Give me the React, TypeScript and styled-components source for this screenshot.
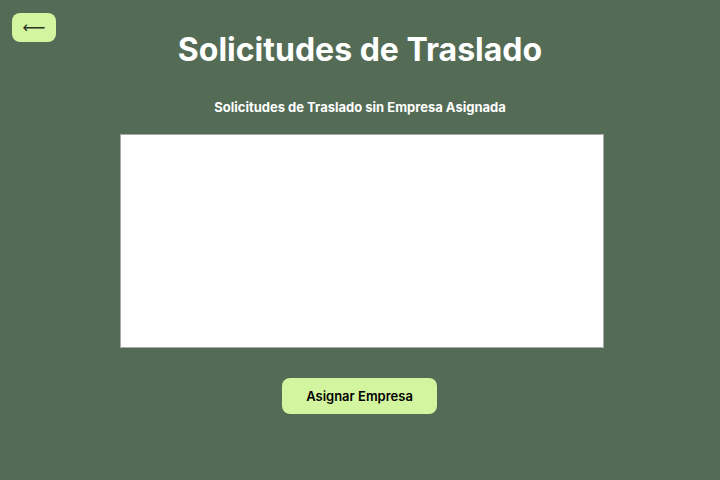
import React from "react";
import styled, { createGlobalStyle } from "styled-components";

const Global = createGlobalStyle`
  html, body { margin: 0; padding: 0; background: #546c56; }
  body { font-family: Inter, "Noto Sans", sans-serif; }
  #root { min-height: 480px; }
`;

const Page = styled.div`
  min-height: 480px;
  box-sizing: border-box;
  padding: 13px 12px 0;
  display: flex;
  flex-direction: column;
  align-items: center;
`;

const Header = styled.header`
  width: 100%;
  display: grid;
  grid-template-columns: 1fr auto 1fr;
  align-items: start;
`;

const BackButton = styled.button`
  justify-self: start;
  width: 44px;
  height: 29px;
  border: none;
  border-radius: 8px;
  background: #d3f59f;
  color: #2a3526;
  font-size: 16px;
  line-height: 1;
  padding: 1px 0 0;
  display: flex;
  align-items: center;
  justify-content: center;
  cursor: pointer;
  font-family: "DejaVu Sans", sans-serif;
`;

const Title = styled.h1`
  margin: 18px 0 0;
  color: #ffffff;
  font-size: 32px;
  font-weight: 700;
  line-height: 38px;
  text-align: center;
`;

const Subtitle = styled.h2`
  margin: 30px 0 0;
  color: #ffffff;
  font-size: 13px;
  font-weight: 700;
  text-align: center;
`;

const ListBox = styled.div`
  margin: 19px 0 0 4px;
  width: 484px;
  height: 214px;
  box-sizing: border-box;
  background: #ffffff;
  border: 1px solid #a9a9a9;
`;

const ActionButton = styled.button`
  margin: 30px 0 0 -1px;
  width: 155px;
  height: 36px;
  border: none;
  border-radius: 8px;
  background: #d3f59f;
  color: #000000;
  font-family: Inter, sans-serif;
  font-size: 13px;
  font-weight: 600;
  cursor: pointer;
`;

export default function App() {
  return (
    <>
      <Global />
      <Page>
        <Header>
          <BackButton aria-label="Volver">⟵</BackButton>
          <Title>Solicitudes de Traslado</Title>
          <span />
        </Header>
        <Subtitle>Solicitudes de Traslado sin Empresa Asignada</Subtitle>
        <ListBox />
        <ActionButton>Asignar Empresa</ActionButton>
      </Page>
    </>
  );
}
